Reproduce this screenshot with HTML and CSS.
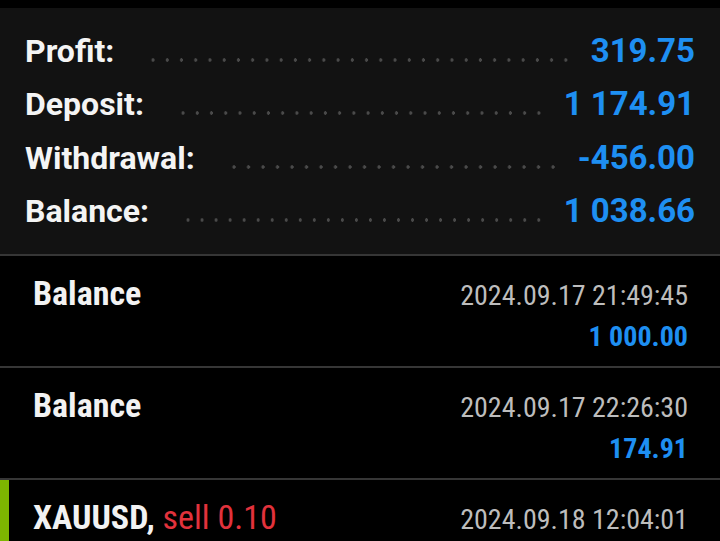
FILE: index.html
```html
<!DOCTYPE html>
<html lang="en">
<head>
<meta charset="utf-8">
<title>History</title>
<link rel="stylesheet" href="styles.css">
</head>
<body>
<div class="topbar"></div>
<section class="summary">
  <div class="srow"><span class="slabel">Profit:</span><span class="dots"></span><span class="sval">319.75</span></div>
  <div class="srow"><span class="slabel">Deposit:</span><span class="dots"></span><span class="sval">1 174.91</span></div>
  <div class="srow"><span class="slabel">Withdrawal:</span><span class="dots"></span><span class="sval">-456.00</span></div>
  <div class="srow"><span class="slabel">Balance:</span><span class="dots"></span><span class="sval">1 038.66</span></div>
</section>
<ul class="deals">
  <li class="deal">
    <div class="line1"><span class="title">Balance</span><span class="date">2024.09.17 21:49:45</span></div>
    <div class="line2"><span class="amount">1 000.00</span></div>
  </li>
  <li class="deal">
    <div class="line1"><span class="title">Balance</span><span class="date">2024.09.17 22:26:30</span></div>
    <div class="line2"><span class="amount">174.91</span></div>
  </li>
  <li class="deal trade">
    <div class="line1"><span class="title">XAUUSD, <span class="sell">sell 0.10</span></span><span class="date">2024.09.18 12:04:01</span></div>
    <div class="line2 prices"><span class="price">2 580.79 → 2 580.99</span></div>
  </li>
</ul>
</body>
</html>
```

FILE: styles.css
```css
html, body {
  margin: 0;
  padding: 0;
  background: #000;
  width: 720px;
  height: 541px;
  overflow: hidden;
}
body {
  font-family: Roboto, "Liberation Sans", sans-serif;
  color: #f2f2f2;
}
.topbar {
  height: 8px;
  background: #000;
}
.summary {
  background: #121212;
  padding: 16px 25px 17px 25px;
  border-bottom: 2px solid #363636;
}
.srow {
  display: flex;
  align-items: baseline;
  height: 53.3px;
  line-height: 53.3px;
  font-size: 33px;
  font-weight: 700;
}
.slabel {
  color: #f4f4f4;
  white-space: nowrap;
  font-size: 32px;
}
.dots {
  flex: 1;
  height: 4px;
  margin: 0 18px 0 32px;
  background-image: radial-gradient(circle, #4a4a4a 1.5px, transparent 1.9px);
  background-size: 14px 4px;
  background-repeat: space no-repeat;
  background-position: right 0;
}
.sval {
  color: #1e8ff2;
  white-space: nowrap;
}
.deals {
  list-style: none;
  margin: 0;
  padding: 0;
}
.deal {
  padding: 17px 32px 9px 33px;
  border-bottom: 2px solid #363636;
  font-family: "Roboto Condensed", "Liberation Sans Narrow", "DejaVu Sans Condensed", Roboto, sans-serif;
  font-stretch: condensed;
}
.line1 {
  display: flex;
  justify-content: space-between;
  align-items: baseline;
  line-height: 40px;
}
.title {
  font-size: 34px;
  font-weight: 700;
  color: #f2f2f2;
}
.sell {
  font-weight: 400;
  color: #e2323c;
}
.date {
  font-size: 28px;
  color: #bdbdbd;
}
.line2 {
  display: flex;
  justify-content: flex-end;
  line-height: 41px;
}
.amount {
  font-size: 28px;
  font-weight: 700;
  color: #1e8ff2;
}
.trade {
  border-left: 9px solid #7db500;
  padding-left: 24px;
}
.prices {
  justify-content: flex-start;
}
.price {
  font-size: 28px;
  color: #bdbdbd;
}
```
